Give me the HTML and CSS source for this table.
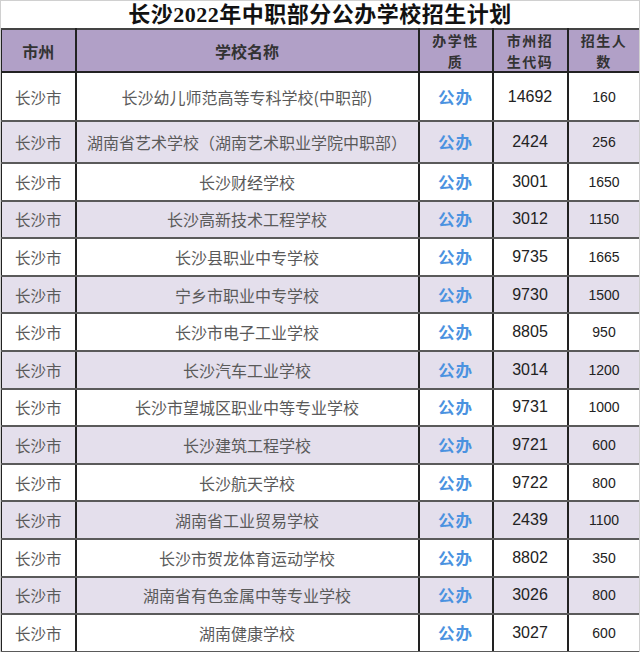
FILE: index.html
```html
<!DOCTYPE html>
<html lang="zh">
<head>
<meta charset="utf-8">
<title>长沙2022年中职部分公办学校招生计划</title>
<link rel="stylesheet" href="styles.css">
</head>
<body>
<div class="sheet">
  <div class="title">长沙2022年中职部分公办学校招生计划</div>
  <table class="plan">
    <colgroup>
      <col class="c-city"><col class="c-name"><col class="c-type"><col class="c-code"><col class="c-num">
    </colgroup>
    <thead>
      <tr class="head">
        <th>市州</th><th>学校名称</th><th><span class="ln">办学性</span><span class="ln">质</span></th><th><span class="ln">市州招</span><span class="ln">生代码</span></th><th><span class="ln">招生人</span><span class="ln">数</span></th>
      </tr>
    </thead>
    <tbody>
      <tr class="r1"><td class="city">长沙市</td><td class="name">长沙幼儿师范高等专科学校(中职部)</td><td class="type">公办</td><td class="code">14692</td><td class="num">160</td></tr>
      <tr class="r2 alt"><td class="city">长沙市</td><td class="name">湖南省艺术学校（湖南艺术职业学院中职部）</td><td class="type">公办</td><td class="code">2424</td><td class="num">256</td></tr>
      <tr><td class="city">长沙市</td><td class="name">长沙财经学校</td><td class="type">公办</td><td class="code">3001</td><td class="num">1650</td></tr>
      <tr class="alt"><td class="city">长沙市</td><td class="name">长沙高新技术工程学校</td><td class="type">公办</td><td class="code">3012</td><td class="num">1150</td></tr>
      <tr><td class="city">长沙市</td><td class="name">长沙县职业中专学校</td><td class="type">公办</td><td class="code">9735</td><td class="num">1665</td></tr>
      <tr class="alt"><td class="city">长沙市</td><td class="name">宁乡市职业中专学校</td><td class="type">公办</td><td class="code">9730</td><td class="num">1500</td></tr>
      <tr><td class="city">长沙市</td><td class="name">长沙市电子工业学校</td><td class="type">公办</td><td class="code">8805</td><td class="num">950</td></tr>
      <tr class="alt"><td class="city">长沙市</td><td class="name">长沙汽车工业学校</td><td class="type">公办</td><td class="code">3014</td><td class="num">1200</td></tr>
      <tr><td class="city">长沙市</td><td class="name">长沙市望城区职业中等专业学校</td><td class="type">公办</td><td class="code">9731</td><td class="num">1000</td></tr>
      <tr class="alt"><td class="city">长沙市</td><td class="name">长沙建筑工程学校</td><td class="type">公办</td><td class="code">9721</td><td class="num">600</td></tr>
      <tr><td class="city">长沙市</td><td class="name">长沙航天学校</td><td class="type">公办</td><td class="code">9722</td><td class="num">800</td></tr>
      <tr class="alt"><td class="city">长沙市</td><td class="name">湖南省工业贸易学校</td><td class="type">公办</td><td class="code">2439</td><td class="num">1100</td></tr>
      <tr><td class="city">长沙市</td><td class="name">长沙市贺龙体育运动学校</td><td class="type">公办</td><td class="code">8802</td><td class="num">350</td></tr>
      <tr class="alt"><td class="city">长沙市</td><td class="name">湖南省有色金属中等专业学校</td><td class="type">公办</td><td class="code">3026</td><td class="num">800</td></tr>
      <tr><td class="city">长沙市</td><td class="name">湖南健康学校</td><td class="type">公办</td><td class="code">3027</td><td class="num">600</td></tr>
    </tbody>
  </table>
</div>
</body>
</html>
```

FILE: styles.css
```css
html, body {
  margin: 0;
  padding: 0;
  background: #ffffff;
}

.sheet {
  width: 640px;
  height: 652px;
  overflow: hidden;
  box-sizing: border-box;
  border-top: 1px solid #d0d0d0;
  border-left: 1px solid #d0d0d0;
  border-right: 1px solid #d0d0d0;
}

.title {
  height: 27px;
  line-height: 27px;
  text-align: center;
  font-family: "Liberation Serif", "Noto Sans CJK SC", serif;
  font-weight: bold;
  font-size: 22px;
  color: #111111;
  letter-spacing: 0.5px;
}

.plan {
  width: 639px;
  table-layout: fixed;
  border-collapse: collapse;
  font-family: "Noto Sans CJK SC", sans-serif;
}

.c-city { width: 74px; }
.c-name { width: 343px; }
.c-type { width: 74px; }
.c-code { width: 75px; }
.c-num  { width: 73px; }

.plan th,
.plan td {
  padding: 0;
  text-align: center;
  vertical-align: middle;
  border-left: 2px solid #222222;
  border-right: 2px solid #222222;
  border-top: 2px solid #5a5a5a;
  border-bottom: 2px solid #5a5a5a;
}

.plan th:first-child,
.plan td:first-child {
  border-left: 1px solid #222222;
}

.head th {
  background: #b1a0c7;
  height: 41px;
  font-size: 16px;
  line-height: 20px;
  font-weight: bold;
  color: #333333;
  border-top: 2px solid #444444;
  border-bottom: 2px solid #222222;
}

.head .ln {
  display: block;
  font-size: 14px;
  height: 20.5px;
  line-height: 20.5px;
  letter-spacing: 1.5px;
}

.plan tbody tr { height: 37.6px; }
.plan tbody tr.r1 { height: 49px; }
.plan tbody tr.r2 { height: 42px; }

.plan tbody tr.alt td { background: #e4dfec; }

.city,
.name {
  font-size: 15.5px;
  color: #5a5a5a;
}

.name { font-size: 16px; }

.type {
  font-size: 16.5px;
  font-weight: bold;
  color: #4a92e0;
  letter-spacing: 1px;
}

.code {
  font-family: "Liberation Sans", Arial, sans-serif;
  font-size: 16px;
  color: #222222;
}

.num {
  font-family: "Liberation Sans", Arial, sans-serif;
  font-size: 14px;
  color: #222222;
}
```
